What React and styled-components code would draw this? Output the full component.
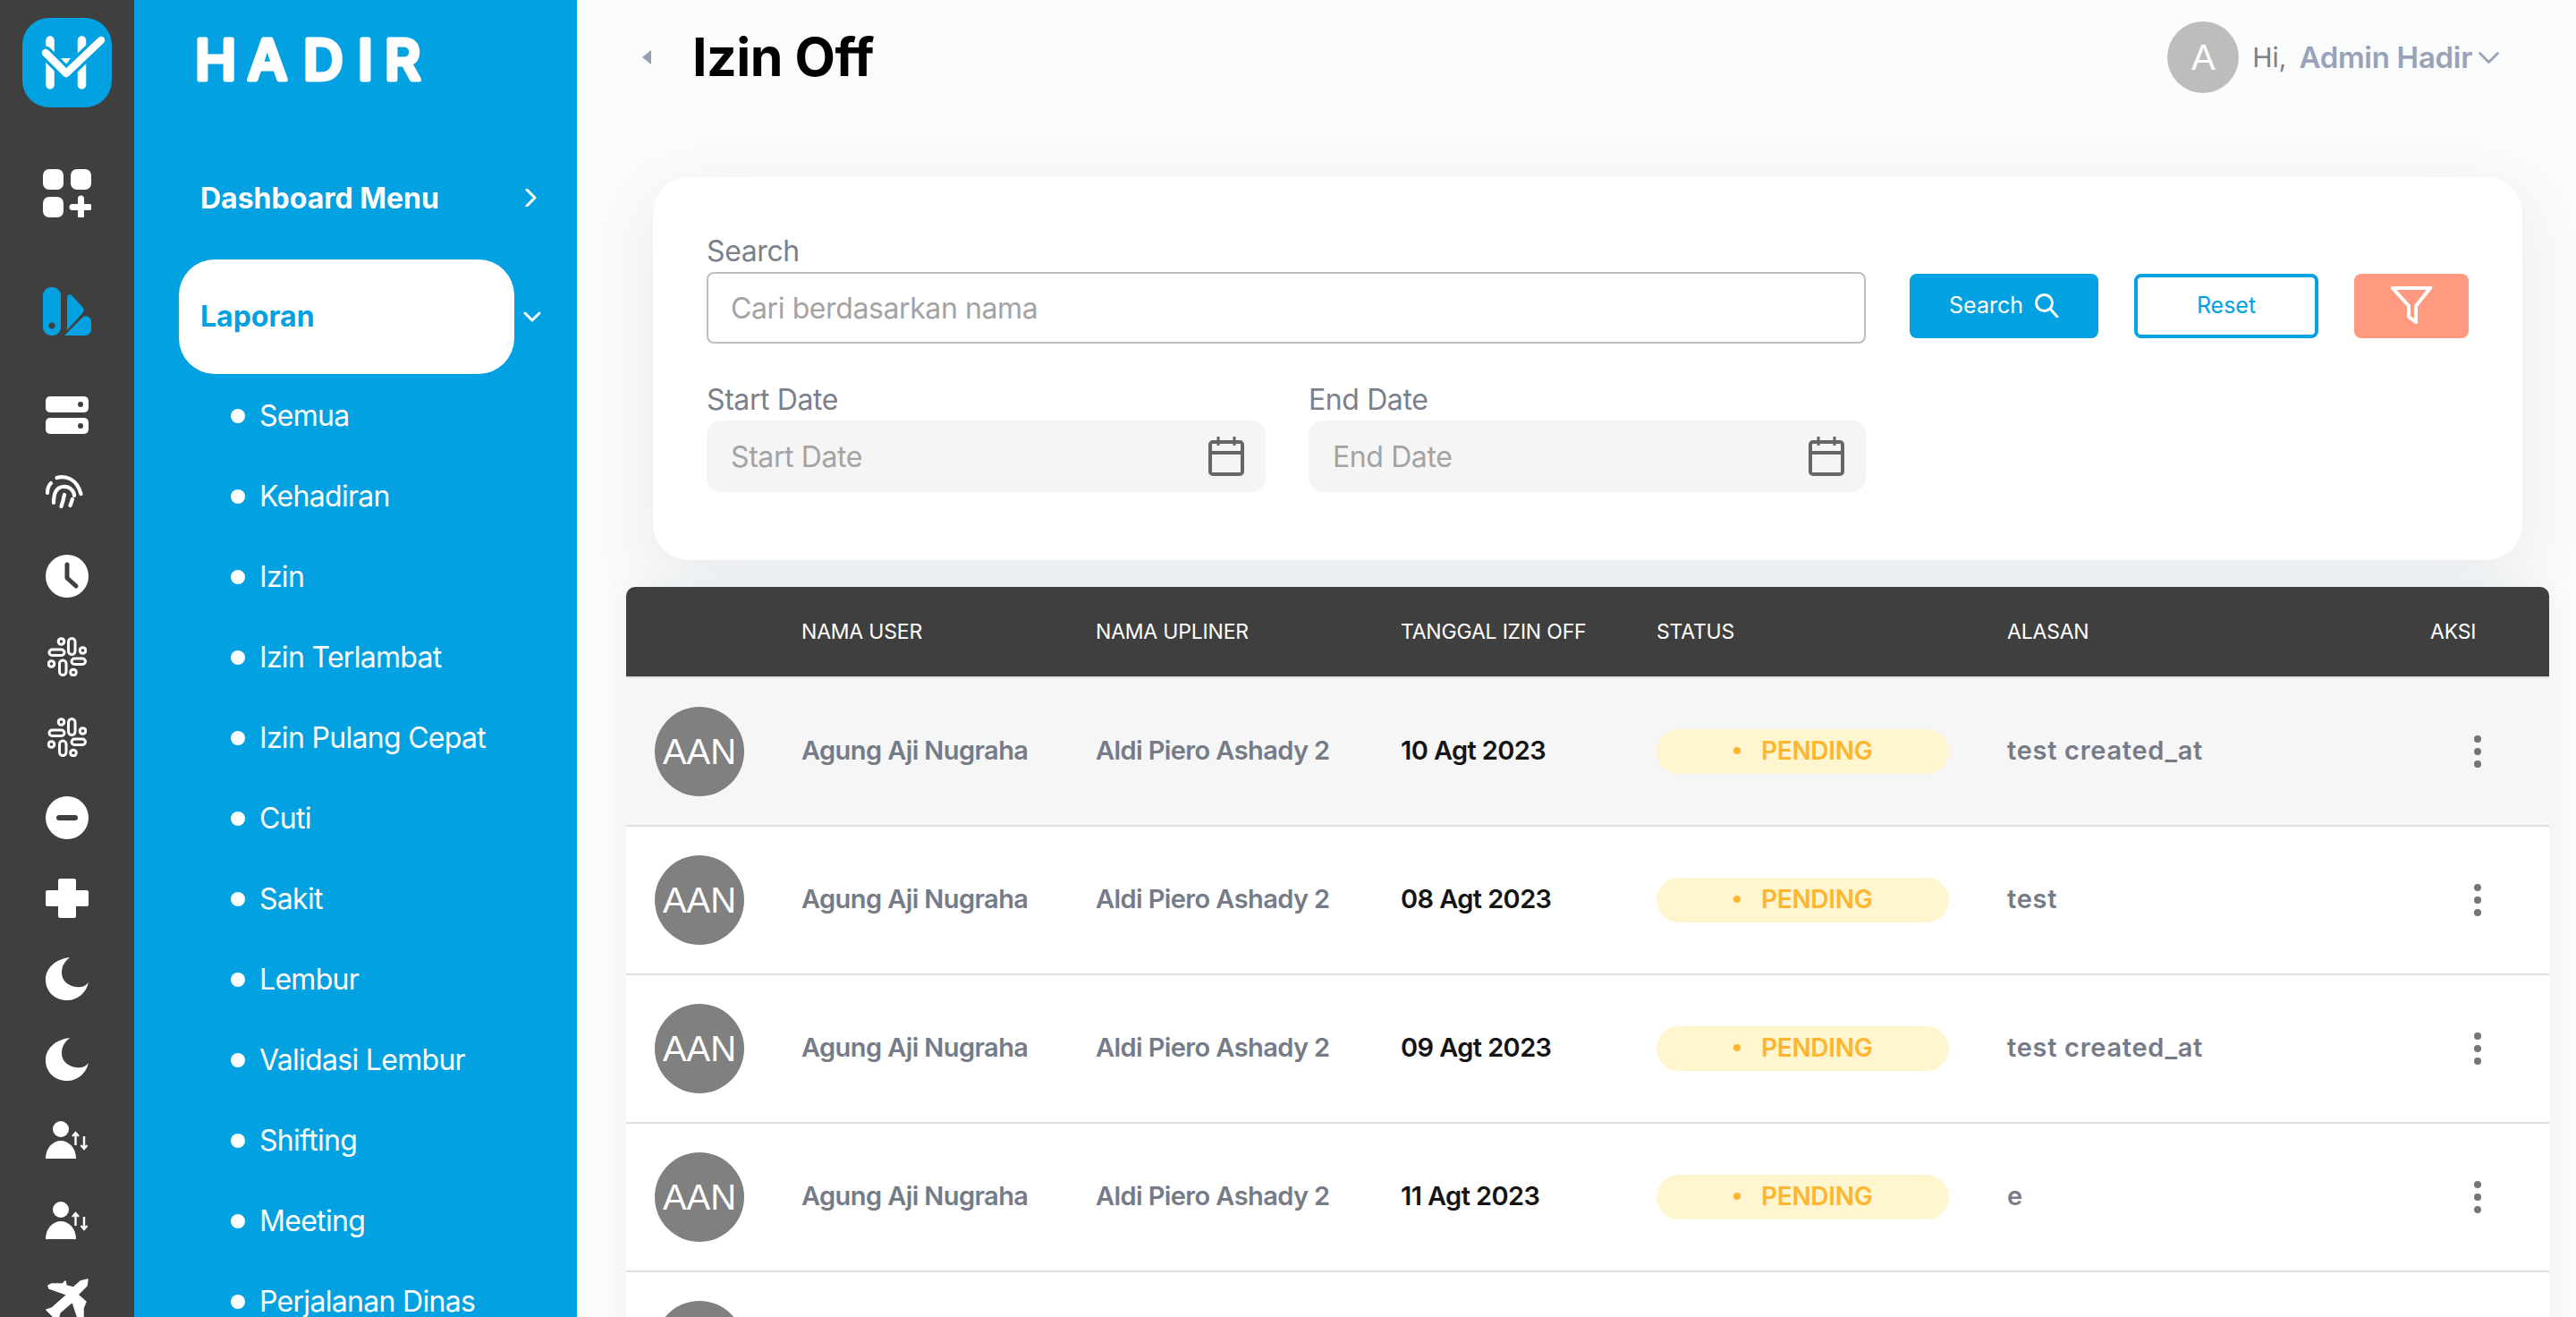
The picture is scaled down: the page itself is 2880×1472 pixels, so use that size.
import React from 'react'
import styled, { createGlobalStyle } from 'styled-components'

const GlobalStyle = createGlobalStyle`
  html, body { margin: 0; padding: 0; height: 100%; overflow: hidden; }
  body { font-family: Inter, "Noto Sans", sans-serif; background: #fafbfb; }
  * { box-sizing: border-box; }
`

const RAIL = '#3f3f3f'
const BLUE = '#02a1e1'
const COLUMNS = '196px 329px 341px 286px 392px 473px 1fr'

const Page = styled.div`
  display: flex;
  width: 2880px;
  height: 1472px;
  overflow: hidden;
`
const Rail = styled.aside`
  width: 150px;
  flex: none;
  height: 1472px;
  overflow: hidden;
  background: ${RAIL};
  display: flex;
  flex-direction: column;
  align-items: center;
  padding-top: 20px;
`
const LogoBox = styled.div`
  width: 100px;
  height: 100px;
  flex: none;
  border-radius: 30px;
  background: ${BLUE};
`
const RailSlot = styled.div`
  width: 100%;
  height: 90px;
  flex: none;
  margin-top: ${p => p.$top || 0}px;
  display: flex;
  align-items: center;
  justify-content: center;
  color: #fff;
`
const Sidebar = styled.nav`
  width: 495px;
  flex: none;
  height: 1472px;
  overflow: hidden;
  background: ${BLUE};
  color: #fff;
`
const Brand = styled.div`
  height: 132px;
  padding-left: 66px;
  display: flex;
  align-items: center;
`
const BrandText = styled.text`
  font-family: Inter, sans-serif;
  font-size: 62px;
  font-weight: 500;
  fill: #fff;
  stroke: #fff;
  stroke-width: 5px;
  stroke-linejoin: round;
`
const MenuRow = styled.div`
  height: 90px;
  margin-top: 45px;
  padding: 0 0 2px 74px;
  display: flex;
  align-items: center;
  font-size: 32px;
  font-weight: 700;
  svg { margin-left: 92px; }
`
const ActiveRow = styled.div`
  display: flex;
  align-items: center;
  margin: 23px 0 2px 50px;
  svg { margin-left: 10px; }
`
const ActivePill = styled.div`
  width: 375px;
  height: 128px;
  border-radius: 40px;
  background: #fff;
  color: ${BLUE};
  padding: 0 0 2px 24px;
  display: flex;
  align-items: center;
  font-size: 32px;
  font-weight: 700;
`
const SubItem = styled.div`
  height: 90px;
  padding-left: 108px;
  display: flex;
  align-items: center;
  gap: 16px;
  font-size: 32px;
  letter-spacing: -0.7px;
  span { padding-bottom: 2px; }
  &::before {
    content: '';
    width: 16px;
    height: 16px;
    border-radius: 50%;
    background: #fff;
  }
`
const Main = styled.main`
  flex: 1;
  min-width: 0;
  background: #fafbfb;
`
const Header = styled.header`
  height: 128px;
  padding: 0 85px 0 73px;
  display: flex;
  align-items: center;
`
const Title = styled.h1`
  margin: 0 0 2px 46px;
  font-size: 59px;
  font-weight: 700;
  letter-spacing: -0.5px;
  color: #000;
  flex: 1;
`
const UserAvatar = styled.div`
  width: 80px;
  height: 80px;
  border-radius: 50%;
  background: #bdbdbd;
  color: #fff;
  font-family: "Liberation Sans", sans-serif;
  font-size: 40px;
  display: flex;
  align-items: center;
  justify-content: center;
`
const Hi = styled.span`
  margin-left: 15px;
  font-size: 30px;
  color: #7a808c;
`
const UserName = styled.span`
  margin: 0 6px 0 14px;
  font-size: 33px;
  font-weight: 600;
  letter-spacing: -0.3px;
  color: #98a2b8;
`
const FilterCard = styled.section`
  height: 428px;
  margin: 70px 60px 0 85px;
  padding: 64px 60px 0;
  background: #fff;
  border-radius: 40px;
  box-shadow: 0 24px 70px rgba(100, 116, 139, 0.12);
  display: flex;
`
const Fields = styled.div`
  width: 1296px;
  flex: none;
  display: flex;
  flex-direction: column;
  gap: 44px;
`
const DateRow = styled.div`
  display: grid;
  grid-template-columns: 625px 623px;
  column-gap: 48px;
`
const Label = styled.div`
  height: 42px;
  font-size: 32px;
  line-height: 37px;
  letter-spacing: -0.4px;
  color: #7a808c;
`
const InputBox = styled.div`
  height: 80px;
  padding: 0 24px 0 ${p => (p.$filled ? 27 : 25)}px;
  display: flex;
  align-items: center;
  justify-content: space-between;
  font-size: 32px;
  letter-spacing: -0.4px;
  color: #a3a3a3;
  background: ${p => (p.$filled ? '#f5f5f5' : '#fff')};
  border: ${p => (p.$filled ? 'none' : '2px solid #bdbdbd')};
  border-radius: ${p => (p.$filled ? '16px' : '8px')};
`
const Buttons = styled.div`
  margin-left: 49px;
  padding-top: 44px;
  display: flex;
  gap: 40px;
  align-items: flex-start;
`
const Button = styled.button`
  width: ${p => p.$w}px;
  height: 72px;
  padding: 0 0 2px;
  display: flex;
  align-items: center;
  justify-content: center;
  gap: 12px;
  font-family: inherit;
  font-size: 25px;
  border-radius: 8px;
  background: ${p => p.$bg};
  color: ${p => p.$color};
  border: ${p => (p.$outline ? `4px solid ${BLUE}` : 'none')};
`
const Table = styled.section`
  margin: 30px 30px 0 55px;
  background: #fff;
  box-shadow: 0 0 30px rgba(100, 116, 139, 0.08);
  border-radius: 10px 10px 0 0;
`
const HeadRow = styled.div`
  height: 100px;
  display: grid;
  grid-template-columns: ${COLUMNS};
  align-items: center;
  background: ${RAIL};
  border-radius: 10px 10px 0 0;
  color: #fff;
  font-size: 23px;
  letter-spacing: -0.2px;
`
const Row = styled.div`
  height: 166px;
  display: grid;
  grid-template-columns: ${COLUMNS};
  align-items: center;
  border-top: 2px solid #e0e0e0;
  background: ${p => (p.$shade ? '#f6f6f6' : '#fff')};
`
const RowAvatar = styled.div`
  width: 100px;
  height: 100px;
  margin-left: 32px;
  border-radius: 50%;
  background: #808080;
  color: #fff;
  font-family: "Liberation Sans", sans-serif;
  font-size: 40px;
  display: flex;
  align-items: center;
  justify-content: center;
`
const Cell = styled.div`
  padding-bottom: 4px;
  font-size: 29px;
  font-weight: 600;
  letter-spacing: ${p => (p.$wide ? '0.7px' : '-0.6px')};
  color: ${p => (p.$dark ? '#141414' : '#757b87')};
`
const Pill = styled.div`
  width: 327px;
  height: 50px;
  padding: 0 0 2px 86px;
  border-radius: 25px;
  background: #fff6cf;
  color: #ffb52e;
  font-size: 28px;
  font-weight: 600;
  letter-spacing: -0.3px;
  display: flex;
  align-items: center;
  gap: 23px;
  &::before {
    content: '';
    width: 8px;
    height: 8px;
    border-radius: 50%;
    background: #ffb52e;
  }
`
const Dots = styled.div`
  margin-left: 49px;
  width: 8px;
  display: flex;
  flex-direction: column;
  gap: 6px;
  span {
    width: 8px;
    height: 8px;
    border-radius: 50%;
    background: #757575;
  }
`

const Logo = () => (
  <LogoBox>
    <svg width="100" height="100" viewBox="0 0 100 100">
      <path d="M31 25V75M66.500 25V75" fill="none" stroke="#fff" strokeWidth="9.500" strokeLinecap="round" />
      <path d="M43 45H54L49 52Z" fill="#fff" />
      <path d="M26 39L49 62L88 25" fill="none" stroke={BLUE} strokeWidth="15" strokeLinecap="round" strokeLinejoin="round" />
      <path d="M26 39L49 62L88 25" fill="none" stroke="#fff" strokeWidth="8.500" strokeLinecap="round" strokeLinejoin="round" />
    </svg>
  </LogoBox>
)
const DashIcon = () => (
  <svg width="54" height="54" viewBox="0 0 54 54" fill="#fff">
    <rect width="23" height="23" rx="7" />
    <rect x="31" width="23" height="23" rx="7" />
    <rect y="31" width="23" height="23" rx="7" />
    <path d="M42.500 33V52M33 42.500H52" stroke="#fff" strokeWidth="7" strokeLinecap="round" />
  </svg>
)
const ReportIcon = () => (
  <svg width="54" height="54" viewBox="0 0 54 54">
    <rect width="20" height="54" rx="9" fill={BLUE} />
    <circle cx="10" cy="43" r="3.500" fill={RAIL} />
    <path d="M27 12C27 8 31 7 33 10L45 23C46 25 46 26 45 28L27 48Z" fill={BLUE} />
    <path d="M24 54L45 33C48 31 54 33 54 39V47C54 51 51 54 47 54Z" fill={BLUE} />
  </svg>
)
const ServerIcon = () => (
  <svg width="48" height="42" viewBox="0 0 48 42" fill="#fff">
    <rect width="48" height="18" rx="5" />
    <rect y="24" width="48" height="18" rx="5" />
    <circle cx="39" cy="9" r="3" fill={RAIL} />
    <circle cx="39" cy="33" r="3" fill={RAIL} />
  </svg>
)
const FingerIcon = () => (
  <svg width="70" height="60" viewBox="0 4 70 60" fill="none" stroke="#fff" strokeWidth="4.200" strokeLinecap="round">
    <path d="M23.500 14C33 11 46 15 50.500 32" />
    <path d="M13 31C13 26 15 22 17 20" />
    <path d="M20 42C20 32 22 25 30 24C38 23 43 29 43 34" />
    <path d="M28.500 46C30 42 31 38 32 33" />
    <path d="M38.500 45L41 38" />
  </svg>
)
const ClockIcon = () => (
  <svg width="48" height="48" viewBox="0 0 48 48">
    <circle cx="24" cy="24" r="24" fill="#fff" />
    <path d="M24 11V26L34 35" fill="none" stroke={RAIL} strokeWidth="5" strokeLinecap="round" strokeLinejoin="round" />
  </svg>
)
const SlackIcon = () => (
  <svg width="44" height="44" viewBox="0 0 44 44" fill="none" stroke="#fff" strokeWidth="3">
    <rect x="23.500" y="1.500" width="7.500" height="18" rx="3.750" />
    <rect x="27" y="24" width="15.500" height="6.500" rx="3.250" />
    <rect x="13.500" y="26" width="7.500" height="16.500" rx="3.750" />
    <rect x="2" y="14" width="17" height="6.500" rx="3.250" />
    <circle cx="15.500" cy="5" r="3.300" />
    <circle cx="39.500" cy="15" r="3.300" />
    <circle cx="29" cy="39.500" r="3.300" />
    <circle cx="4.500" cy="30" r="3.300" />
  </svg>
)
const MinusIcon = () => (
  <svg width="48" height="48" viewBox="0 0 48 48">
    <circle cx="24" cy="24" r="24" fill="#fff" />
    <rect x="12" y="21" width="24" height="6" rx="3" fill={RAIL} />
  </svg>
)
const PlusIcon = () => (
  <svg width="48" height="44" viewBox="0 0 48 44" fill="#fff">
    <path d="M14 2C14 1 15 0 16 0H32C33 0 34 1 34 2V13H46C47 13 48 14 48 15V29C48 30 47 31 46 31H34V42C34 43 33 44 32 44H16C15 44 14 43 14 42V31H2C1 31 0 30 0 29V15C0 14 1 13 2 13H14Z" />
  </svg>
)
const MoonIcon = () => (
  <svg width="48" height="48" viewBox="0 0 48 48" fill="#fff">
    <path d="M27 0C11 2 0 12 0 25C0 38 10 48 24 48C36 48 45 40 48 28C44 33 39 34 34 33C25 32 18 26 18 17C18 10 21 5 27 0Z" />
  </svg>
)
const UserSwapIcon = () => (
  <svg width="48" height="42" viewBox="0 0 48 42" fill="#fff">
    <ellipse cx="17" cy="9" rx="9" ry="9" />
    <path d="M0 42C0 30 8 22 17 22C26 22 34 30 34 42Z" />
    <path d="M33.500 27V13M30 17L33.500 13L37 17M43 17V31M39.500 27L43 31L46.500 27" fill="none" stroke="#fff" strokeWidth="2.400" />
  </svg>
)
const PlaneIcon = () => (
  <svg width="70" height="90" viewBox="0 -3 70 90" fill="#fff" stroke="#fff" strokeWidth="1.500" strokeLinejoin="round">
    <path d="M58 18L57 25L47 35L56 43L53 50V70H50L41 43L27 55L25 62H22L12 52L18 50L35 35L15 28L14 25L18 23L30 23L33 20L34 25L42 27L50 20Z" />
  </svg>
)
const CalendarIcon = () => (
  <svg width="40" height="44" viewBox="0 0 40 44" fill="none" stroke="#666" strokeWidth="4">
    <rect x="2" y="6" width="36" height="36" rx="3" />
    <path d="M0 18H40" />
    <path d="M11 0V10M29 0V10" strokeWidth="3" />
  </svg>
)
const Chevron = ({ dir = 'down', size = 20, color = '#fff', sw = 3 }) => (
  <svg width={size} height={size} viewBox="0 0 20 20" fill="none" stroke={color} strokeWidth={sw} strokeLinecap="round" strokeLinejoin="round">
    <path d={dir === 'down' ? 'M2 6L10 14L18 6' : 'M6 1L15 10L6 19'} />
  </svg>
)

const subItems = ['Semua', 'Kehadiran', 'Izin', 'Izin Terlambat', 'Izin Pulang Cepat', 'Cuti', 'Sakit', 'Lembur', 'Validasi Lembur', 'Shifting', 'Meeting', 'Perjalanan Dinas']
const rows = [
  { date: '10 Agt 2023', reason: 'test created_at', shade: true },
  { date: '08 Agt 2023', reason: 'test' },
  { date: '09 Agt 2023', reason: 'test created_at' },
  { date: '11 Agt 2023', reason: 'e' },
]

export default function App() {
  return (
    <Page>
      <GlobalStyle />
      <Rail>
        <Logo />
        <RailSlot $top={51}><DashIcon /></RailSlot>
        <RailSlot $top={42}><ReportIcon /></RailSlot>
        <RailSlot $top={26}><ServerIcon /></RailSlot>
        <RailSlot><FingerIcon /></RailSlot>
        <RailSlot><ClockIcon /></RailSlot>
        <RailSlot><SlackIcon /></RailSlot>
        <RailSlot><SlackIcon /></RailSlot>
        <RailSlot><MinusIcon /></RailSlot>
        <RailSlot><PlusIcon /></RailSlot>
        <RailSlot><MoonIcon /></RailSlot>
        <RailSlot><MoonIcon /></RailSlot>
        <RailSlot><UserSwapIcon /></RailSlot>
        <RailSlot><UserSwapIcon /></RailSlot>
        <RailSlot><PlaneIcon /></RailSlot>
      </Rail>
      <Sidebar>
        <Brand>
          <svg width="300" height="90" viewBox="0 0 300 90">
            <BrandText x="2 61 123 184 214" y="68">HADIR</BrandText>
          </svg>
        </Brand>
        <MenuRow>Dashboard Menu<Chevron dir="right" /></MenuRow>
        <ActiveRow>
          <ActivePill>Laporan</ActivePill>
          <Chevron />
        </ActiveRow>
        {subItems.map(s => <SubItem key={s}><span>{s}</span></SubItem>)}
      </Sidebar>
      <Main>
        <Header>
          <svg width="10" height="16" viewBox="0 0 10 16"><path d="M10 0V16L0 8Z" fill="#94a0b4" /></svg>
          <Title>Izin Off</Title>
          <UserAvatar>A</UserAvatar>
          <Hi>Hi,</Hi>
          <UserName>Admin Hadir</UserName>
          <Chevron size={25} color="#98a2b8" sw={2.2} />
        </Header>
        <FilterCard>
          <Fields>
            <div>
              <Label>Search</Label>
              <InputBox>Cari berdasarkan nama</InputBox>
            </div>
            <DateRow>
              <div>
                <Label>Start Date</Label>
                <InputBox $filled>Start Date<CalendarIcon /></InputBox>
              </div>
              <div>
                <Label>End Date</Label>
                <InputBox $filled>End Date<CalendarIcon /></InputBox>
              </div>
            </DateRow>
          </Fields>
          <Buttons>
            <Button $w={211} $bg={BLUE} $color="#fff">
              Search
              <svg width="28" height="28" viewBox="0 0 28 28" fill="none" stroke="#fff" strokeWidth="3" strokeLinecap="round">
                <circle cx="11.500" cy="11.500" r="9" />
                <path d="M18 18L26 27" />
              </svg>
            </Button>
            <Button $w={206} $bg="#fff" $color={BLUE} $outline>Reset</Button>
            <Button $w={128} $bg="#ff9a80">
              <svg width="46" height="42" viewBox="0 0 46 42" fill="none" stroke="#fff" strokeWidth="4">
                <path d="M2 2H44L28 22V40L20 34V22Z" />
              </svg>
            </Button>
          </Buttons>
        </FilterCard>
        <Table>
          <HeadRow>
            <span />
            <span>NAMA USER</span>
            <span>NAMA UPLINER</span>
            <span>TANGGAL IZIN OFF</span>
            <span>STATUS</span>
            <span>ALASAN</span>
            <span>AKSI</span>
          </HeadRow>
          {rows.map(r => (
            <Row key={r.date} $shade={r.shade}>
              <RowAvatar>AAN</RowAvatar>
              <Cell>Agung Aji Nugraha</Cell>
              <Cell>Aldi Piero Ashady 2</Cell>
              <Cell $dark>{r.date}</Cell>
              <Pill>PENDING</Pill>
              <Cell $wide>{r.reason}</Cell>
              <Dots><span /><span /><span /></Dots>
            </Row>
          ))}
          {/* this row runs off the bottom of the page, only the top of its avatar shows */}
          <Row><RowAvatar /></Row>
        </Table>
      </Main>
    </Page>
  )
}
